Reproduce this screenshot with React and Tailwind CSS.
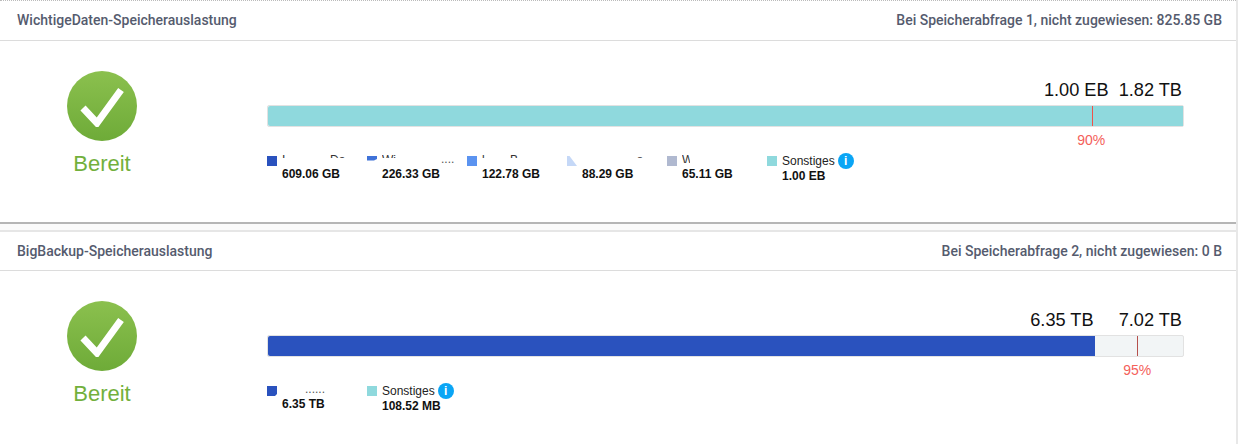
const sans = "font-['Liberation_Sans',Arial,sans-serif]"

const volumes = [
  {
    title: 'WichtigeDaten-Speicherauslastung',
    note: 'Bei Speicherabfrage 1, nicht zugewiesen: 825.85 GB',
    headerClass: 'h-[41px] border-t [border-top-style:dotted] border-t-[#bbbbbb]',
    used: '1.00 EB',
    total: '1.82 TB',
    totalsGap: 'gap-[10px]',
    fill: 100,
    fillColor: 'bg-[#8fd9dd]',
    mark: 90,
    markColor: 'bg-[#f0524a]',
    legend: [
      { color: 'bg-[#2a52be]', value: '609.06 GB', segs: [{ text: 'I', cls: 'w-[48px]' }, { text: 'Da', cls: 'w-[20px]' }] },
      {
        color: 'bg-[#3f72d8]',
        clip: '[clip-path:polygon(0_0,100%_0,100%_30%,70%_45%,0_45%)]',
        value: '226.33 GB',
        segs: [{ text: 'Wi', cls: 'w-[59px]' }],
        dots: '....',
      },
      { color: 'bg-[#5b93f0]', value: '122.78 GB', segs: [{ text: 'l', cls: 'w-[28px]' }, { text: 'B', cls: 'w-[12px]' }] },
      {
        color: 'bg-[#c5d8f7]',
        clip: '[clip-path:polygon(0_0,25%_0,100%_100%,0_100%)]',
        value: '88.29 GB',
        segs: [{ text: '', cls: 'w-[55px]' }, { text: 's', cls: 'w-[8px]' }],
      },
      { color: 'bg-[#b0b9d0]', value: '65.11 GB', segs: [{ text: 'W', cls: 'w-[8px]', tall: true }] },
      { color: 'bg-[#8fd9dd]', label: 'Sonstiges', value: '1.00 EB', info: true },
    ],
  },
  {
    title: 'BigBackup-Speicherauslastung',
    note: 'Bei Speicherabfrage 2, nicht zugewiesen: 0 B',
    headerClass: 'h-[39px]',
    used: '6.35 TB',
    total: '7.02 TB',
    totalsGap: 'gap-[25px]',
    fill: 90.4,
    fillColor: 'bg-[#2a52be]',
    mark: 95,
    markColor: 'bg-[#b5504c]',
    legend: [
      {
        color: 'bg-[#2a52be]',
        clip: '[clip-path:polygon(0_0,100%_0,100%_80%,80%_100%,0_100%)]',
        value: '6.35 TB',
        segs: [{ text: '', cls: 'w-[23px]' }],
        dots: '......',
      },
      { color: 'bg-[#8fd9dd]', label: 'Sonstiges', value: '108.52 MB', info: true },
    ],
  },
]

function ReadyBadge() {
  return (
    <div className="mr-[63px] flex w-[204px] shrink-0 flex-col items-center pt-[30px]">
      <div className="flex h-[70px] w-[70px] items-center justify-center rounded-full bg-gradient-to-b from-[#8bc04e] to-[#6eab38]">
        <svg width="44" height="41" viewBox="0 0 44 41" fill="none">
          <path d="M3 22l14 15L41 4" stroke="white" strokeWidth="7" />
        </svg>
      </div>
      <div className={`mt-[9px] text-[22px] leading-[28px] text-[#72b03c] ${sans}`}>Bereit</div>
    </div>
  )
}

function LegendItem({ item }) {
  return (
    <div className={item.info ? 'shrink-0' : 'w-[100px] shrink-0'}>
      <div className={`flex items-start ${item.info ? 'h-[15px]' : 'h-[13px]'}`}>
        <div className={`mt-[2px] h-[10px] w-[10px] shrink-0 ${item.color} ${item.clip || ''}`} />
        <div className="ml-[5px] flex items-start">
          {item.info ? (
            <div className="-mt-[1px] flex items-center">
              <span className="text-[12px] leading-[14px] text-[#222]">{item.label}</span>
              <span className="ml-[3px] flex h-[16px] w-[16px] items-center justify-center rounded-full bg-[#0aa5f5] text-[12px] leading-none font-bold text-white">
                i
              </span>
            </div>
          ) : (
            item.segs.map((seg, i) => (
              <span
                key={i}
                className={`-mt-[1px] block overflow-hidden text-[12px] leading-[14px] text-[#333] ${seg.tall ? 'h-[10px]' : 'h-[5px]'} ${seg.cls}`}
              >
                {seg.text}
              </span>
            ))
          )}
          {item.dots && <span className="text-[12px] leading-[11px] text-[#555]">{item.dots}</span>}
        </div>
      </div>
      <div className="ml-[15px] text-[12px] leading-[14px] font-bold text-[#111]">{item.value}</div>
    </div>
  )
}

function VolumeCard({ volume }) {
  return (
    <section>
      <header
        className={`flex items-center justify-between border-b border-b-[#dcdcdc] pr-[14px] pl-[17px] font-['Roboto',sans-serif] text-[14px] font-medium text-[#555b6e] ${volume.headerClass}`}
      >
        <span>{volume.title}</span>
        <span>{volume.note}</span>
      </header>
      <div className={`flex pr-[52px] ${sans}`}>
        <ReadyBadge />
        <div className="min-w-0 flex-1 pt-[39px]">
          <div className={`flex justify-end pr-[2px] text-[18.2px] leading-[20px] text-[#111] ${volume.totalsGap}`}>
            <span>{volume.used}</span>
            <span>{volume.total}</span>
          </div>
          <div className="relative mt-[5px] h-[22px] rounded-[2px] border border-[#e2e2e2] bg-[#f2f5f6]">
            <div className={`h-full rounded-l-[2px] ${volume.fillColor}`} style={{ width: `${volume.fill}%` }} />
            <div className={`absolute top-0 h-full w-px ${volume.markColor}`} style={{ left: `${volume.mark}%` }} />
          </div>
          <div className="relative h-[20px]">
            <span className="absolute top-[5px] -ml-[1px] -translate-x-1/2 text-[14px] leading-[16px] text-[#f4615a]" style={{ left: `${volume.mark}%` }}>
              {volume.mark}%
            </span>
          </div>
          <div className="mt-[7px] flex">
            {volume.legend.map((item) => (
              <LegendItem key={item.value} item={item} />
            ))}
          </div>
        </div>
      </div>
    </section>
  )
}

export default function App() {
  return (
    <div className="h-[444px] overflow-hidden border-r-2 border-[#e8e8e8] bg-white">
      <div className="h-[222px]">
        <VolumeCard volume={volumes[0]} />
      </div>
      <div className="h-[10px] border-t-2 border-b-2 border-t-[#b5b5b5] border-b-[#e6e6e6] bg-[#fafafa]" />
      <VolumeCard volume={volumes[1]} />
    </div>
  )
}
